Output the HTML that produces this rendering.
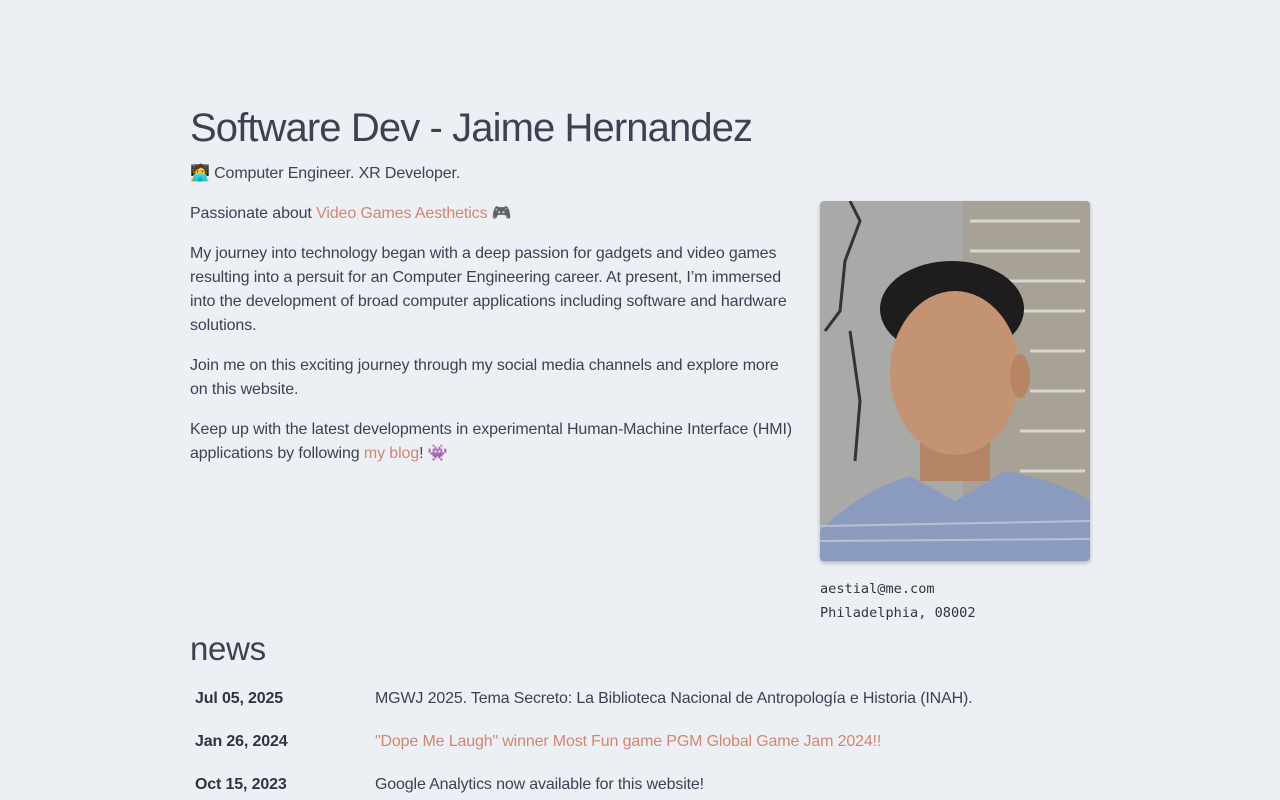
<!DOCTYPE html>
<html><head><meta charset="utf-8"><style>
body{margin:0;background:#eceff4;color:#2e3440;font-family:"Liberation Sans",sans-serif;font-weight:300}
h1{position:absolute;left:190px;top:106px;margin:0;font-size:40px;font-weight:300;color:#3b4252;letter-spacing:-0.9px}
p{margin:0;font-size:16px;line-height:24px;color:#3b4252;letter-spacing:-0.12px}
a{color:#d08770;text-decoration:none}
.mono{font-family:"DejaVu Sans Mono","Liberation Mono",monospace;font-size:13.6px;line-height:24px;color:#2e3440}
h2{position:absolute;left:190px;top:630px;margin:0;font-size:33px;font-weight:300;color:#3b4252;letter-spacing:-0.3px}
.row{position:absolute;left:195px;font-size:16px;color:#3b4252;letter-spacing:-0.15px}
.row b{position:absolute;left:0;font-weight:700;color:#2e3440;white-space:nowrap}
.row span{position:absolute;left:180px;white-space:nowrap}
</style></head><body>
<h1>Software Dev - Jaime Hernandez</h1>
<p style="position:absolute;left:190px;top:162px">🧑‍💻 Computer Engineer. XR Developer.</p>
<div style="position:absolute;left:190px;top:202px;width:607px">
<p>Passionate about <a>Video Games Aesthetics</a> 🎮</p>
<p style="margin-top:16px">My journey into technology began with a deep passion for gadgets and video games resulting into a persuit for an Computer Engineering career. At present, I’m immersed into the development of broad computer applications including software and hardware solutions.</p>
<p style="margin-top:16px">Join me on this exciting journey through my social media channels and explore more on this website.</p>
<p style="margin-top:16px">Keep up with the latest developments in experimental Human-Machine Interface (HMI) applications by following <a>my blog</a>! 👾</p>
</div>
<svg style="position:absolute;left:820px;top:201px;border-radius:4px;box-shadow:0 2px 4px rgba(0,0,0,.25)" width="270" height="360" viewBox="0 0 270 360">
<rect width="270" height="360" fill="#a9a9a7"/>
<rect x="143" width="127" height="300" fill="#a8a296"/>
<g stroke="#d8d6d0" stroke-width="3">
<line x1="150" y1="20" x2="260" y2="20"/><line x1="150" y1="50" x2="260" y2="50"/><line x1="160" y1="80" x2="265" y2="80"/><line x1="200" y1="110" x2="265" y2="110"/><line x1="210" y1="150" x2="265" y2="150"/><line x1="210" y1="190" x2="265" y2="190"/><line x1="200" y1="230" x2="265" y2="230"/><line x1="200" y1="270" x2="265" y2="270"/></g>
<path d="M30 0 L40 20 L25 60 L20 110 L5 130 M30 130 L40 200 L35 260" stroke="#333" stroke-width="3" fill="none"/>
<ellipse cx="132" cy="108" rx="72" ry="48" fill="#1e1c1c"/>
<rect x="100" y="220" width="70" height="60" fill="#b38566"/>
<ellipse cx="135" cy="172" rx="65" ry="82" fill="#c49373"/>
<ellipse cx="200" cy="175" rx="10" ry="22" fill="#b88466"/>
<path d="M0 330 Q40 290 90 275 L135 300 L185 270 Q240 280 270 300 L270 360 L0 360Z" fill="#8b9bc0"/>
<g stroke="#b8bfd4" stroke-width="2"><line x1="0" y1="325" x2="270" y2="320"/><line x1="0" y1="340" x2="270" y2="338"/></g>
</svg>
<div class="mono" style="position:absolute;left:820px;top:577px">aestial@me.com<br>Philadelphia, 08002</div>
<h2>news</h2>
<div class="row" style="top:690px"><b>Jul 05, 2025</b><span>MGWJ 2025. Tema Secreto: La Biblioteca Nacional de Antropología e Historia (INAH).</span></div>
<div class="row" style="top:733px"><b>Jan 26, 2024</b><span><a>"Dope Me Laugh" winner Most Fun game PGM Global Game Jam 2024!!</a></span></div>
<div class="row" style="top:776px"><b>Oct 15, 2023</b><span>Google Analytics now available for this website!</span></div>
</body></html>
